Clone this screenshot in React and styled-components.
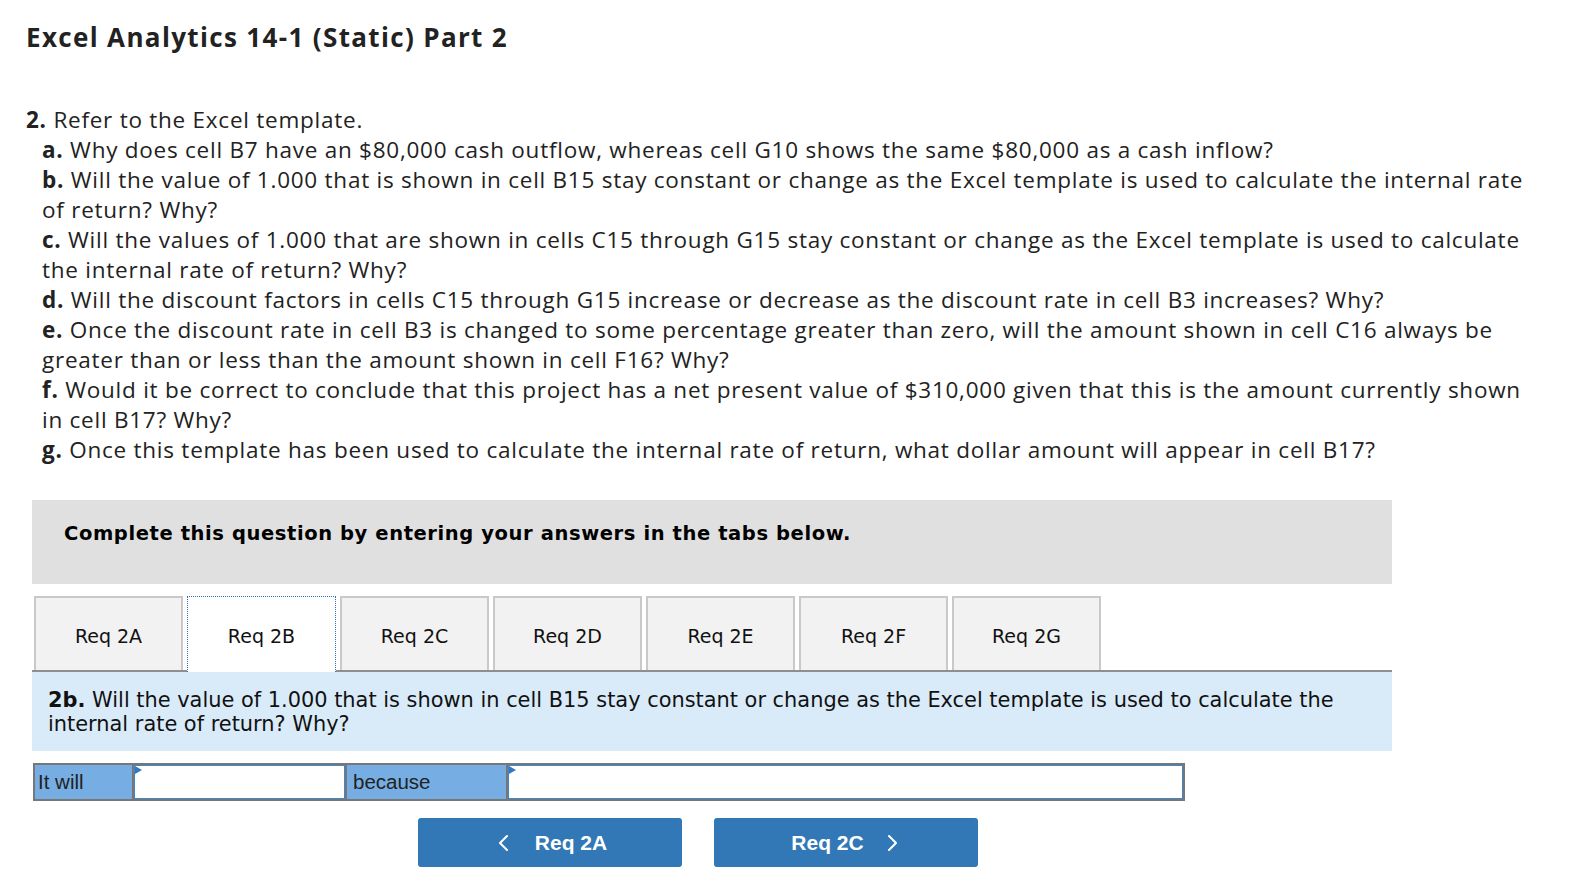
import React from "react";
import styled, { createGlobalStyle, css } from "styled-components";

const Global = createGlobalStyle`
  html, body { margin: 0; padding: 0; background: #fff; }
  body { font-family: "Open Sans", sans-serif; color: #1f1f1f; }
  * { box-sizing: border-box; }
`;

const Page = styled.div`
  padding: 22px 0 20px 26px;
  width: 1584px;
`;

const Title = styled.h1`
  margin: 0;
  font-family: "Open Sans", sans-serif;
  font-weight: 700;
  font-size: 26px;
  letter-spacing: 1.35px;
  line-height: 30px;
  color: #222;
`;

const Question = styled.div`
  margin-top: 53px;
  width: 1502px;
  font-family: "Open Sans", sans-serif;
  font-size: 22.5px;
  letter-spacing: 0.75px;
  line-height: 30px;
  color: #222;
`;

const Lead = styled.div``;

const SubItem = styled.div`
  padding-left: 16px;
`;

const B = styled.b`
  font-weight: 700;
`;

const Widget = styled.div`
  margin: 35px 0 0 6px;
  width: 1360px;
`;

const Banner = styled.div`
  height: 84px;
  background: #e0e0e0;
  padding: 22px 0 0 32px;
  font-family: "DejaVu Sans", Verdana, sans-serif;
  font-weight: 700;
  font-size: 19.5px;
  letter-spacing: 0.6px;
  line-height: 24px;
  color: #000;
`;

const TabRow = styled.div`
  margin-top: 12px;
  display: flex;
  gap: 4px;
  padding-left: 2px;
  border-bottom: 2px solid #8f8f8f;
  height: 76px;
`;

const Tab = styled.div`
  width: 149px;
  height: 74px;
  display: flex;
  align-items: center;
  justify-content: center;
  padding-top: 3px;
  font-family: "DejaVu Sans", Verdana, sans-serif;
  font-size: 19px;
  color: #111;
  background: #f2f2f2;
  border: 2px solid #c9c9c9;
  border-bottom: none;
  ${(p) =>
    p.$active &&
    css`
      background: #fff;
      border: 1px dotted #2f6fb7;
      border-bottom: none;
      height: 76px;
      position: relative;
      z-index: 1;
    `}
`;

const Panel = styled.div`
  background: #d9ebf9;
  padding: 16px 16px 15px 16px;
  font-family: "DejaVu Sans", Verdana, sans-serif;
  font-size: 20.9px;
  line-height: 24px;
  color: #111;
`;

const AnswerRow = styled.div`
  margin: 12px 0 0 1px;
  display: flex;
  width: 1152px;
  height: 38px;
  border: 2px solid #777;
  background: #777;
  gap: 2px;
  font-family: "Liberation Sans", Arial, sans-serif;
  font-size: 20.5px;
  color: #222;
`;

const Label = styled.div`
  width: ${(p) => p.$w}px;
  background: #76aee3;
  display: flex;
  align-items: center;
  padding-left: ${(p) => p.$pad}px;
`;

const InputCell = styled.div`
  width: ${(p) => p.$w}px;
  flex: ${(p) => (p.$grow ? 1 : "none")};
  background: #fff;
  border: 1px solid #3f87cc;
  position: relative;
  &::before {
    content: "";
    position: absolute;
    left: 0;
    top: 0;
    border-left: 7px solid #3478bf;
    border-top: 4px solid transparent;
    border-bottom: 4px solid transparent;
  }
`;

const NavRow = styled.div`
  margin: 17px 0 0 386px;
  display: flex;
  gap: 32px;
`;

const NavButton = styled.button`
  width: 264px;
  height: 49px;
  border: none;
  border-radius: 3px;
  background: #3278b6;
  color: #fff;
  font-family: "Liberation Sans", Arial, sans-serif;
  font-weight: 700;
  font-size: 21px;
  display: flex;
  align-items: center;
  justify-content: center;
  gap: ${(p) => (p.$next ? 24 : 27)}px;
  padding: ${(p) => (p.$next ? "0 4px 0 0" : "0 0 0 6px")};
  cursor: pointer;
`;

const Chevron = ({ dir }) => (
  <svg width="9" height="16" viewBox="0 0 9 16" aria-hidden="true">
    <polyline
      points={dir === "left" ? "8,1 1,8 8,15" : "1,1 8,8 1,15"}
      fill="none"
      stroke="#fff"
      strokeWidth="2"
      strokeLinecap="round"
      strokeLinejoin="round"
    />
  </svg>
);

const tabs = ["Req 2A", "Req 2B", "Req 2C", "Req 2D", "Req 2E", "Req 2F", "Req 2G"];

export default function App() {
  return (
    <Page>
      <Global />
      <Title>Excel Analytics 14-1 (Static) Part 2</Title>
      <Question>
        <Lead>
          <B>2.</B> Refer to the Excel template.
        </Lead>
        <SubItem>
          <B>a.</B> Why does cell B7 have an $80,000 cash outflow, whereas cell G10 shows the same $80,000 as a cash inflow?
        </SubItem>
        <SubItem>
          <B>b.</B> Will the value of 1.000 that is shown in cell B15 stay constant or change as the Excel template is used to calculate the internal rate of return? Why?
        </SubItem>
        <SubItem>
          <B>c.</B> Will the values of 1.000 that are shown in cells C15 through G15 stay constant or change as the Excel template is used to calculate the internal rate of return? Why?
        </SubItem>
        <SubItem>
          <B>d.</B> Will the discount factors in cells C15 through G15 increase or decrease as the discount rate in cell B3 increases? Why?
        </SubItem>
        <SubItem>
          <B>e.</B> Once the discount rate in cell B3 is changed to some percentage greater than zero, will the amount shown in cell C16 always be greater than or less than the amount shown in cell F16? Why?
        </SubItem>
        <SubItem>
          <B>f.</B> Would it be correct to conclude that this project has a net present value of $310,000 given that this is the amount currently shown in cell B17? Why?
        </SubItem>
        <SubItem>
          <B>g.</B> Once this template has been used to calculate the internal rate of return, what dollar amount will appear in cell B17?
        </SubItem>
      </Question>

      <Widget>
        <Banner>Complete this question by entering your answers in the tabs below.</Banner>
        <TabRow>
          {tabs.map((t) => (
            <Tab key={t} $active={t === "Req 2B"}>
              {t}
            </Tab>
          ))}
        </TabRow>
        <Panel>
          <B>2b.</B> Will the value of 1.000 that is shown in cell B15 stay constant or change as the Excel template is used to calculate the internal rate of return? Why?
        </Panel>
        <AnswerRow>
          <Label $w={97} $pad={3}>It will</Label>
          <InputCell $w={211} />
          <Label $w={159} $pad={6}>because</Label>
          <InputCell $grow />
        </AnswerRow>
        <NavRow>
          <NavButton>
            <Chevron dir="left" />
            <span>Req 2A</span>
          </NavButton>
          <NavButton $next>
            <span>Req 2C</span>
            <Chevron dir="right" />
          </NavButton>
        </NavRow>
      </Widget>
    </Page>
  );
}
